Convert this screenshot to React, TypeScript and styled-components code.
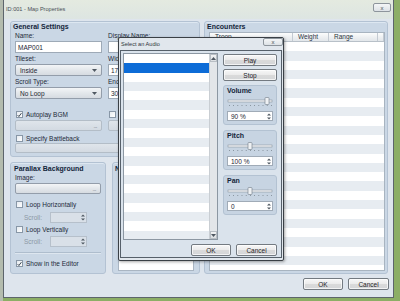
import React from 'react'
import styled, { createGlobalStyle } from 'styled-components'

const GlobalStyle = createGlobalStyle`
  html, body {
    margin: 0;
    padding: 0;
  }
  body {
    width: 400px;
    height: 301px;
    overflow: hidden;
    font-family: "Liberation Sans", Arial, sans-serif;
    color: #1d2a39;
  }
  * {
    box-sizing: border-box;
  }
`

const Desktop = styled.div`
  width: 400px;
  height: 301px;
  display: flex;
  padding-left: 3px;
  background: linear-gradient(90deg, #b4bcae 0, #b4bcae 3px, #8cae66 3px);
`

const Window = styled.div`
  position: relative;
  width: 391px;
  height: 298px;
  display: flex;
  flex-direction: column;
  background: #dee5ed;
  border: 1px solid #5d656c;
  border-top: none;
`

const TitleBar = styled.div`
  height: 19px;
  display: flex;
  justify-content: space-between;
  align-items: flex-start;
  padding: 0 2px;
  background: linear-gradient(180deg, #e4eae0 0%, #dde5e2 100%);
`

const WindowTitle = styled.span`
  font-size: 5.6px;
  line-height: 18px;
  color: #4a5056;
  white-space: nowrap;
`

const CloseButton = styled.div<{ $w: number; $h: number; $mt: number }>`
  width: ${p => p.$w}px;
  height: ${p => p.$h}px;
  margin-top: ${p => p.$mt}px;
  display: flex;
  align-items: center;
  justify-content: center;
  border: 1px solid #8d959c;
  border-radius: 2px;
  background: linear-gradient(180deg, #f4f6f7 0%, #dde2e6 100%);
  font-size: 6px;
  line-height: 1;
  color: #4a5057;
`

const Client = styled.div`
  flex: 1;
  display: flex;
  flex-direction: column;
  padding: 2px 5px 0 6px;
`

const Main = styled.div`
  display: flex;
  gap: 4px;
  height: 253px;
`

const LeftArea = styled.div`
  width: 190px;
  display: flex;
  flex-direction: column;
  gap: 5px;
`

const BottomRow = styled.div`
  flex: 1;
  display: flex;
  gap: 6px;
`

const Footer = styled.div`
  display: flex;
  justify-content: flex-end;
  gap: 5px;
  margin-top: 4px;
  margin-right: -1px;
`

const GroupBox = styled.div<{ $pad: string; $width?: number; $height?: number }>`
  display: flex;
  flex-direction: column;
  padding: ${p => p.$pad};
  background: #cad7e5;
  border: 1px solid #b3c2d3;
  border-radius: 3px;
  box-shadow: inset 0 1px 0 #dde7f1;
  ${p => (p.$width ? `width: ${p.$width}px;` : 'flex: 1;')}
  ${p => (p.$height ? `height: ${p.$height}px; flex: none;` : '')}
  overflow: hidden;
`

const GroupTitle = styled.div<{ $indent?: number }>`
  height: 9px;
  font-size: 7px;
  font-weight: bold;
  line-height: 9px;
  color: #13253a;
  white-space: nowrap;
  margin-left: ${p => p.$indent ?? 0}px;
`

const TwoCols = styled.div`
  display: grid;
  grid-template-columns: 87px 87px;
  column-gap: 6px;
`

const Field = styled.div`
  display: flex;
  flex-direction: column;
  margin-bottom: 1px;
`

const FieldLabel = styled.div<{ $disabled?: boolean }>`
  height: 9px;
  font-size: 6.5px;
  line-height: 9px;
  white-space: nowrap;
  color: ${p => (p.$disabled ? '#8c98a5' : '#1d2a39')};
`

const TextBox = styled.div<{ $h?: number }>`
  height: ${p => p.$h ?? 12}px;
  margin-top: 1px;
  display: flex;
  align-items: center;
  padding: 0 2px;
  background: #ffffff;
  border: 1px solid #9eaab7;
  font-size: 6.5px;
  white-space: nowrap;
  color: #1b2633;
`

const ComboBox = styled.div<{ $disabled?: boolean; $h?: number }>`
  height: ${p => p.$h ?? 12}px;
  margin-top: 1px;
  display: flex;
  align-items: center;
  justify-content: space-between;
  padding: 0 4px 0 4px;
  border: 1px solid ${p => (p.$disabled ? '#b3bdc7' : '#939daa')};
  border-radius: 2px;
  background: ${p =>
    p.$disabled
      ? 'linear-gradient(180deg, #dfe5eb 0%, #d3dae2 100%)'
      : 'linear-gradient(180deg, #f3f5f7 0%, #e3e7eb 50%, #d6dbe1 100%)'};
  font-size: 6.5px;
  color: #1b2633;
  white-space: nowrap;
`

const Dots = styled.span`
  font-size: 6px;
  letter-spacing: -0.5px;
  color: #6b7580;
`

const CheckRow = styled.div<{ $mt?: number }>`
  height: 9px;
  margin-top: ${p => p.$mt ?? 0}px;
  display: flex;
  align-items: center;
  gap: 3px;
  padding-left: 1px;
  font-size: 6.5px;
  white-space: nowrap;
`

const CheckBoxBox = styled.span`
  width: 7px;
  height: 7px;
  flex: none;
  display: inline-flex;
  align-items: center;
  justify-content: center;
  border: 1px solid #8897a7;
  background: linear-gradient(135deg, #e6ebf0 0%, #ffffff 100%);
`

const ScrollRow = styled.div<{ $mt: number }>`
  height: 11px;
  margin-top: ${p => p.$mt}px;
  display: flex;
  align-items: center;
  padding-left: 9px;
`

const ScrollLabel = styled.span`
  width: 26px;
  font-size: 6.5px;
  color: #8c98a5;
`

const SpinBox = styled.div<{ $disabled?: boolean; $w?: number; $h: number }>`
  width: ${p => (p.$w ? `${p.$w}px` : 'auto')};
  height: ${p => p.$h}px;
  display: flex;
  align-items: center;
  justify-content: space-between;
  padding: 0 1px 0 3px;
  background: ${p => (p.$disabled ? '#d9e0e8' : '#ffffff')};
  border: 1px solid ${p => (p.$disabled ? '#b6c0cb' : '#a0abb7')};
  font-size: 6.5px;
  color: #1b2633;
`

const Separator = styled.div`
  height: 2px;
  margin-top: 5px;
  border-top: 1px solid #aebdcd;
  border-bottom: 1px solid #dde6ef;
`

const NoteArea = styled.div`
  flex: 1;
  margin-top: 3px;
  background: #ffffff;
  border: 1px solid #a9b5c2;
`

const ListFrame = styled.div`
  flex: 1;
  display: flex;
  flex-direction: column;
  margin-top: 1px;
  background: #ffffff;
  border: 1px solid #a8b4c0;
  overflow: hidden;
`

const HeaderRow = styled.div`
  height: 9px;
  flex: none;
  display: flex;
  background: linear-gradient(180deg, #fcfdfd 0%, #eef0f2 50%, #e2e6ea 100%);
  border-bottom: 1px solid #b8c0c8;
`

const HeaderCell = styled.div<{ $w?: number }>`
  ${p => (p.$w ? `width: ${p.$w}px;` : 'flex: 1;')}
  padding-left: 5px;
  font-size: 6.5px;
  line-height: 8px;
  color: #2a3542;
  border-right: 1px solid #c3cad2;
  white-space: nowrap;
`

const StripeRow = styled.div<{ $odd: boolean; $selected?: boolean }>`
  height: 9.3px;
  flex: none;
  background: ${p => (p.$selected ? '#0d6cd7' : p.$odd ? '#e7ecf1' : '#ffffff')};
`

const Button = styled.div<{ $w?: number }>`
  width: ${p => (p.$w ? `${p.$w}px` : 'auto')};
  height: 12px;
  display: flex;
  align-items: center;
  justify-content: center;
  border: 1px solid #737a81;
  border-radius: 2px;
  background: linear-gradient(180deg, #f7f7f7 0%, #ebebeb 48%, #dadada 52%, #d4d6d8 100%);
  box-shadow: inset 0 0 0 1px rgba(255, 255, 255, 0.7);
  font-size: 6.5px;
  color: #1f2328;
`

/* audio dialog */

const Dialog = styled.div`
  position: absolute;
  left: 114px;
  top: 37px;
  width: 166px;
  height: 224px;
  display: flex;
  flex-direction: column;
  background: #e1e7ed;
  border: 1px solid #3a4046;
  border-radius: 2px;
  box-shadow: 1px 1px 3px rgba(0, 0, 0, 0.35);
`

const DialogTitleBar = styled.div`
  height: 12px;
  flex: none;
  display: flex;
  justify-content: space-between;
  align-items: flex-start;
  padding-left: 2px;
`

const DialogTitle = styled.span`
  font-size: 5.6px;
  line-height: 12px;
  color: #2f353b;
  white-space: nowrap;
`

const DialogPanel = styled.div`
  flex: 1;
  margin: 0 1px 2px 1px;
  display: grid;
  grid-template-columns: 95px 54px;
  grid-template-rows: 187px 12px;
  column-gap: 5px;
  row-gap: 4px;
  padding: 2px 4px 1px 2px;
  background: #dae3ec;
  border: 1px solid #56606a;
`

const AudioList = styled.div`
  display: flex;
  background: #ffffff;
  border: 1px solid #8c97a2;
  overflow: hidden;
`

const AudioRows = styled.div`
  flex: 1;
  display: flex;
  flex-direction: column;
  overflow: hidden;
`

const ScrollBar = styled.div`
  width: 8px;
  flex: none;
  display: flex;
  flex-direction: column;
  justify-content: space-between;
  background: #e3e6e9;
  border-left: 1px solid #c9ced3;
`

const ScrollArrow = styled.div`
  height: 8px;
  display: flex;
  align-items: center;
  justify-content: center;
  background: linear-gradient(180deg, #f2f3f4 0%, #dcdfe2 100%);
  border: 1px solid #b8bec4;
`

const ControlColumn = styled.div`
  display: flex;
  flex-direction: column;
  padding-top: 1px;
`

const ControlGroup = styled.div<{ $mt: number }>`
  height: 40px;
  margin-top: ${p => p.$mt}px;
  display: flex;
  flex-direction: column;
  padding: 0 3px;
  background: #c7d4e2;
  border: 1px solid #b3c2d2;
  border-radius: 3px;
`

const DialogButtons = styled.div`
  grid-column: 1 / span 2;
  display: flex;
  justify-content: flex-end;
  gap: 5px;
`

const Spacer = styled.div<{ $h: number }>`
  height: ${p => p.$h}px;
  flex: none;
`

const Arrow = ({ up }: { up?: boolean }) => (
  <svg width="5" height="3" viewBox="0 0 5 3">
    <path d={up ? 'M0 3 L2.5 0 L5 3 Z' : 'M0 0 L5 0 L2.5 3 Z'} fill="#4f5862" />
  </svg>
)

const SpinArrows = () => (
  <svg width="4" height="7" viewBox="0 0 4 7">
    <path d="M0 2.6 L2 0.4 L4 2.6 Z" fill="#4f5862" />
    <path d="M0 4.4 L4 4.4 L2 6.6 Z" fill="#4f5862" />
  </svg>
)

const Check = ({ checked, label, mt }: { checked?: boolean; label: string; mt?: number }) => (
  <CheckRow $mt={mt}>
    <CheckBoxBox>
      {checked && (
        <svg width="6" height="6" viewBox="0 0 6 6">
          <path d="M0.8 3.2 L2.3 4.8 L5.3 0.8" fill="none" stroke="#23303d" strokeWidth="1.1" />
        </svg>
      )}
    </CheckBoxBox>
    <span>{label}</span>
  </CheckRow>
)

const Slider = ({ pos }: { pos: number }) => (
  <svg width="46" height="12" viewBox="0 0 46 12">
    <rect x="1" y="5" width="44" height="2" fill="#f4f6f8" stroke="#8b959f" strokeWidth="0.6" />
    {Array.from({ length: 11 }, (_, i) => (
      <rect key={i} x={2 + i * 4.2} y="10" width="0.8" height="1" fill="#7b8690" />
    ))}
    <rect x={pos - 2} y="2.5" width="4" height="7" rx="0.8" fill="#eef1f4" stroke="#6e7984" strokeWidth="0.6" />
  </svg>
)

const AudioControl = ({ title, value, pos, mt }: { title: string; value: string; pos: number; mt: number }) => (
  <ControlGroup $mt={mt}>
    <GroupTitle>{title}</GroupTitle>
    <Slider pos={pos} />
    <Spacer $h={4} />
    <SpinBox $h={10}>
      <span>{value}</span>
      <SpinArrows />
    </SpinBox>
  </ControlGroup>
)

const encounterRows = Array.from({ length: 26 }, (_, i) => i)
const audioRows = Array.from({ length: 20 }, (_, i) => i)

const App = () => {
  return (
    <>
      <GlobalStyle />
      <Desktop>
        <Window>
          <TitleBar>
            <WindowTitle>ID:001 - Map Properties</WindowTitle>
            <CloseButton $w={18} $h={9} $mt={3}>x</CloseButton>
          </TitleBar>
          <Client>
            <Main>
              <LeftArea>
                <GroupBox $pad="0 4px 3px 4px" $height={136}>
                  <GroupTitle $indent={-2}>General Settings</GroupTitle>
                  <TwoCols>
                    <Field>
                      <FieldLabel>Name:</FieldLabel>
                      <TextBox>MAP001</TextBox>
                    </Field>
                    <Field>
                      <FieldLabel>Display Name:</FieldLabel>
                      <TextBox />
                    </Field>
                    <Field>
                      <FieldLabel>Tileset:</FieldLabel>
                      <ComboBox>
                        <span>Inside</span>
                        <Arrow />
                      </ComboBox>
                    </Field>
                    <Field>
                      <FieldLabel>Width:</FieldLabel>
                      <TextBox>17</TextBox>
                    </Field>
                    <Field>
                      <FieldLabel>Scroll Type:</FieldLabel>
                      <ComboBox>
                        <span>No Loop</span>
                        <Arrow />
                      </ComboBox>
                    </Field>
                    <Field>
                      <FieldLabel>Encounter Steps:</FieldLabel>
                      <TextBox>30</TextBox>
                    </Field>
                    <div>
                      <Check checked label="Autoplay BGM" mt={10} />
                      <ComboBox $disabled $h={11}>
                        <span />
                        <Dots>...</Dots>
                      </ComboBox>
                    </div>
                    <div>
                      <Check label="Autoplay BGS" mt={10} />
                      <ComboBox $disabled $h={11}>
                        <span />
                        <Dots>...</Dots>
                      </ComboBox>
                    </div>
                  </TwoCols>
                  <Check label="Specify Battleback" mt={3} />
                  <ComboBox $disabled $h={11}>
                    <span />
                    <Dots>...</Dots>
                  </ComboBox>
                </GroupBox>
                <BottomRow>
                  <GroupBox $pad="1px 4px 4px 4px" $width={96}>
                    <GroupTitle $indent={-1}>Parallax Background</GroupTitle>
                    <FieldLabel>Image:</FieldLabel>
                    <ComboBox $h={11}>
                      <span />
                      <Dots>...</Dots>
                    </ComboBox>
                    <Check label="Loop Horizontally" mt={6} />
                    <ScrollRow $mt={3}>
                      <ScrollLabel>Scroll:</ScrollLabel>
                      <SpinBox $disabled $w={37} $h={11}>
                        <span />
                        <SpinArrows />
                      </SpinBox>
                    </ScrollRow>
                    <Check label="Loop Vertically" mt={2} />
                    <ScrollRow $mt={2}>
                      <ScrollLabel>Scroll:</ScrollLabel>
                      <SpinBox $disabled $w={37} $h={11}>
                        <span />
                        <SpinArrows />
                      </SpinBox>
                    </ScrollRow>
                    <Separator />
                    <Check checked label="Show in the Editor" mt={5} />
                  </GroupBox>
                  <GroupBox $pad="1px 5px 2px 5px">
                    <GroupTitle $indent={-3}>Note</GroupTitle>
                    <NoteArea />
                  </GroupBox>
                </BottomRow>
              </LeftArea>
              <GroupBox $pad="0 2px 2px 4px">
                <GroupTitle $indent={-2}>Encounters</GroupTitle>
                <ListFrame>
                  <HeaderRow>
                    <HeaderCell $w={83}>Troop</HeaderCell>
                    <HeaderCell $w={36}>Weight</HeaderCell>
                    <HeaderCell $w={49}>Range</HeaderCell>
                    <HeaderCell />
                  </HeaderRow>
                  {encounterRows.map(i => (
                    <StripeRow key={i} $odd={i % 2 === 1} />
                  ))}
                </ListFrame>
              </GroupBox>
            </Main>
            <Footer>
              <Button $w={40}>OK</Button>
              <Button $w={41}>Cancel</Button>
            </Footer>
          </Client>

          <Dialog>
            <DialogTitleBar>
              <DialogTitle>Select an Audio</DialogTitle>
              <CloseButton $w={20} $h={8} $mt={0}>x</CloseButton>
            </DialogTitleBar>
            <DialogPanel>
              <AudioList>
                <AudioRows>
                  {audioRows.map(i => (
                    <StripeRow key={i} $odd={i % 2 === 1} $selected={i === 1} />
                  ))}
                </AudioRows>
                <ScrollBar>
                  <ScrollArrow>
                    <Arrow up />
                  </ScrollArrow>
                  <ScrollArrow>
                    <Arrow />
                  </ScrollArrow>
                </ScrollBar>
              </AudioList>
              <ControlColumn>
                <Button>Play</Button>
                <Spacer $h={3} />
                <Button>Stop</Button>
                <AudioControl title="Volume" value="90 %" pos={40} mt={4} />
                <AudioControl title="Pitch" value="100 %" pos={23} mt={5} />
                <AudioControl title="Pan" value="0" pos={23} mt={5} />
              </ControlColumn>
              <DialogButtons>
                <Button $w={40}>OK</Button>
                <Button $w={41}>Cancel</Button>
              </DialogButtons>
            </DialogPanel>
          </Dialog>
        </Window>
      </Desktop>
    </>
  )
}

export default App
